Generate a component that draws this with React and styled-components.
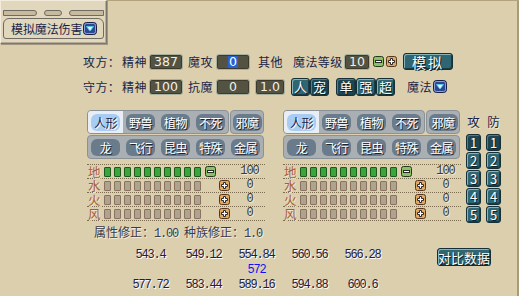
import React from 'react';
import styled, { createGlobalStyle } from 'styled-components';

const Global = createGlobalStyle`
  html, body { margin: 0; padding: 0; background: #dccfad; }
  body { font-family: "Noto Sans CJK SC", "Noto Sans", sans-serif; }
  * { box-sizing: border-box; }
`;

const NAVY = '#1b1f46';
const CJK = '"Noto Sans CJK SC", "Noto Sans", sans-serif';
const MONO = '"Liberation Mono", "DejaVu Sans Mono", monospace';

const Page = styled.div`
  width: 519px;
  height: 296px;
  overflow: hidden;
  background: #dccfad;
  box-shadow: inset 0 1px 0 #b3a37d, inset -2px 0 0 #a99a78;
  color: ${NAVY};
  font-family: ${CJK};
  font-size: 12px;
`;

/* ---------- title frame ---------- */
const TitleFrame = styled.div`
  width: 107px;
  height: 44px;
  background: #e1d7bd;
  border: 1px solid #f3ecdc;
  border-right-color: #7e776b;
  border-bottom-color: #7e776b;
  box-shadow: inset -1px -1px 0 #b4ab98, 1px 1px 0 #a09682;
  padding: 8px 2px 0 2px;
  display: flex;
  flex-direction: column;
  gap: 1px;
`;
const Grooves = styled.div`
  display: flex;
  align-items: center;
  justify-content: space-between;
  height: 8px;
`;
const Groove = styled.div`
  width: ${p => p.w}px;
  height: 6px;
  background: #c7bb9f;
  border: 1px solid #6f6a62;
  border-radius: ${p => p.r};
`;
const TitleBox = styled.div`
  height: 21px;
  border: 1px solid #6f6a62;
  border-radius: 6px 6px 3px 3px;
  display: flex;
  align-items: center;
  padding-left: 7px;
  gap: 1px;
  font-size: 12px;
  letter-spacing: -0.1px;
  color: ${NAVY};
`;

const DropIcon = () => (
  <svg width="14" height="13" viewBox="0 0 14 13">
    <rect x="0.5" y="0.5" width="13" height="12" rx="3" fill="#2c4890" stroke="#18204a" />
    <rect x="1.5" y="1.5" width="11" height="10" rx="2" fill="none" stroke="#8ea2dc" />
    <polygon points="3.5,4.5 10.5,4.5 7,9" fill="#eaffff" stroke="#5cc4e4" />
  </svg>
);

/* ---------- form rows ---------- */
const Form = styled.div`
  display: flex;
  flex-direction: column;
  gap: 8px;
  margin: 9px 0 0 83px;
`;
const Row = styled.div`
  display: flex;
  align-items: center;
  height: 17px;
`;
const Label = styled.span`
  flex: none;
  width: ${p => p.w}px;
  margin-left: ${p => p.ml || 0}px;
  font-size: 12px;
  letter-spacing: 0.4px;
  white-space: nowrap;
  color: ${NAVY};
  line-height: 17px;
`;
const Field = styled.div`
  flex: none;
  width: ${p => p.w}px;
  height: 16px;
  margin-left: ${p => p.ml || 0}px;
  background: #545240;
  border: 1px solid #a9b19f;
  border-radius: 3px;
  box-shadow: inset 0 0 0 1px #3c3a2e;
  color: #f1f0e6;
  font-family: "DejaVu Sans", sans-serif;
  font-size: 12.5px;
  display: flex;
  align-items: center;
  justify-content: center;
`;
const Selected = styled.span`
  background: #2c5fd0;
  color: #fff;
  padding: 0 1px;
  line-height: 12px;
`;
const StepWrap = styled.span`
  flex: none;
  display: inline-flex;
  margin-left: ${p => p.ml || 0}px;
`;
const StepIcon = ({ kind }) =>
  kind === 'minus' ? (
    <svg width="11" height="11" viewBox="0 0 11 11">
      <rect x="0.5" y="0.5" width="10" height="10" rx="2" fill="#8cbf6a" stroke="#243a1a" />
      <rect x="2.5" y="4.5" width="6" height="2" fill="#ffffff" stroke="#2a2a2a" />
    </svg>
  ) : (
    <svg width="11" height="11" viewBox="0 0 11 11">
      <rect x="0.5" y="0.5" width="10" height="10" rx="2" fill="#e0a864" stroke="#57361a" />
      <path d="M4.5 2.5h2v2h2v2h-2v2h-2v-2h-2v-2h2z" fill="#ffffff" stroke="#2a2a2a" />
    </svg>
  );

const TealBtn = styled.div`
  flex: none;
  width: ${p => p.w}px;
  height: ${p => p.h || 17}px;
  margin-left: ${p => p.ml || 0}px;
  background: ${p => (p.dark ? '#1d4652' : '#2f6672')};
  border: 1px solid #173038;
  border-radius: 3px;
  box-shadow: inset 1px 1px 0 ${p => (p.dark ? '#4f7f88' : '#86b4ba')}, inset -1px -1px 0 #1a3c44;
  color: #ffffff;
  font-size: ${p => p.fs || 13}px;
  letter-spacing: ${p => p.ls || 0}px;
  display: flex;
  align-items: center;
  justify-content: center;
  text-shadow: 1px 1px 0 #0e2228;
`;
const BtnGroup = styled.div`
  flex: none;
  display: flex;
  margin-left: ${p => p.ml || 0}px;
`;

/* ---------- middle ---------- */
const Middle = styled.div`
  display: flex;
  margin: 15px 0 0 87px;
`;
const Side = styled.div`
  flex: none;
  width: 178px;
  margin-left: ${p => p.ml || 0}px;
`;
const TabPanel = styled.div`
  display: flex;
  flex-direction: column;
  gap: 1px;
  width: 177px;
`;
const TabRow = styled.div`
  display: flex;
  height: 24px;
  gap: 1px;
`;
const TabSeg = styled.div`
  display: flex;
  flex: ${p => (p.w ? 'none' : 1)};
  width: ${p => (p.w ? `${p.w}px` : 'auto')};
  height: 24px;
  background: #a9afb2;
  border: 1px solid #8b9296;
  border-radius: 4px;
  overflow: hidden;
`;
const TabCell = styled.div`
  flex: 1;
  display: flex;
  align-items: center;
  justify-content: center;
  background: ${p => (p.active ? '#e8eef3' : 'transparent')};
`;
const TabPill = styled.div`
  width: 29px;
  height: 17px;
  border-radius: 6px;
  background: ${p => (p.active ? '#a9cdf2' : '#6a7b8c')};
  color: ${p => (p.active ? NAVY : '#ffffff')};
  text-shadow: ${p => (p.active ? '1px 1px 0 #ffffff' : '1px 1px 0 #1a2430')};
  font-size: 12px;
  letter-spacing: -0.5px;
  display: flex;
  align-items: center;
  justify-content: center;
  white-space: nowrap;
`;

const Bars = styled.div`
  margin-top: 5px;
  border-top: 1px dotted #7b6c52;
`;
const BarRow = styled.div`
  display: flex;
  align-items: center;
  height: 14px;
  border-bottom: 1px dotted #7b6c52;
`;
const ElemLabel = styled.span`
  flex: none;
  width: 17px;
  padding-left: 1px;
  font-size: 12.5px;
  line-height: 13px;
  color: #a75c3a;
  text-shadow: 1px 1px 0 #efe6d0;
`;
const Cells = styled.div`
  flex: none;
  display: flex;
  gap: 3px;
  width: 97px;
`;
const Cell = styled.div`
  width: 7px;
  height: 10px;
  border-radius: 1px;
  background: ${p => (p.on ? '#3aa53a' : '#aea48d')};
  border: 1px solid ${p => (p.on ? '#1e5a1e' : '#8a7262')};
`;
const StepSlot = styled.div`
  flex: none;
  width: 29px;
  display: flex;
  padding-left: ${p => (p.op === 'minus' ? 4 : 18)}px;
`;
const Value = styled.span`
  flex: 1;
  text-align: center;
  padding-left: 4px;
  font-family: ${MONO};
  font-size: 12px;
  line-height: 13px;
  letter-spacing: -1px;
  color: #3b3a36;
  text-shadow: 1px 1px 0 #f2ead6;
`;

const AtkDef = styled.div`
  flex: none;
  margin-left: 5px;
  display: grid;
  grid-template-columns: 15px 15px;
  grid-template-rows: 23px;
  grid-auto-rows: 17px;
  column-gap: 5px;
  row-gap: 1px;
`;
const HeadCell = styled.div`
  display: flex;
  align-items: center;
  justify-content: center;
  font-size: 12.5px;
  color: ${NAVY};
  text-shadow: 1px 1px 0 #f2ead6;
`;

/* ---------- bottom ---------- */
const Correction = styled.div`
  margin: 2px 0 0 94px;
  height: 14px;
  line-height: 14px;
  font-size: 12px;
  color: #3a3a4a;
  text-shadow: 1px 1px 0 #f5eedc;
  white-space: nowrap;
`;
const Mono = styled.span`
  font-family: ${MONO};
  font-size: 12px;
  letter-spacing: -1.2px;
`;
const Results = styled.div`
  display: flex;
  align-items: flex-start;
  margin: 9px 0 0 124px;
`;
const Grid = styled.div`
  display: grid;
  grid-template-columns: repeat(5, 53px);
  grid-template-rows: repeat(3, 15px);
`;
const Num = styled.div`
  grid-row: ${p => p.row};
  grid-column: ${p => p.col};
  text-align: center;
  font-family: ${MONO};
  font-size: 12px;
  line-height: 15px;
  letter-spacing: -1.2px;
  color: ${p => (p.blue ? '#1212f0' : '#1e2142')};
  text-shadow: ${p => (p.blue ? 'none' : '1px 1px 0 #ffffff')};
`;

const TABS1A = ['人形', '野兽', '植物', '不死'];
const TABS2 = ['龙', '飞行', '昆虫', '特殊', '金属'];
const ELEMENTS = [
  { name: '地', filled: 10, value: 100, op: 'minus' },
  { name: '水', filled: 0, value: 0, op: 'plus' },
  { name: '火', filled: 0, value: 0, op: 'plus' },
  { name: '风', filled: 0, value: 0, op: 'plus' },
];
const ROW1 = ['543.4', '549.12', '554.84', '560.56', '566.28'];
const ROW3 = ['577.72', '583.44', '589.16', '594.88', '600.6'];

function SidePanel({ ml }) {
  return (
    <Side ml={ml}>
      <TabPanel>
        <TabRow>
          <TabSeg w={142}>
            {TABS1A.map((t, i) => (
              <TabCell key={t} active={i === 0}>
                <TabPill active={i === 0}>{t}</TabPill>
              </TabCell>
            ))}
          </TabSeg>
          <TabSeg>
            <TabCell>
              <TabPill>邪魔</TabPill>
            </TabCell>
          </TabSeg>
        </TabRow>
        <TabRow>
          <TabSeg>
            {TABS2.map(t => (
              <TabCell key={t}>
                <TabPill>{t}</TabPill>
              </TabCell>
            ))}
          </TabSeg>
        </TabRow>
      </TabPanel>
      <Bars>
        {ELEMENTS.map(e => (
          <BarRow key={e.name}>
            <ElemLabel>{e.name}</ElemLabel>
            <Cells>
              {Array.from({ length: 10 }).map((_, i) => (
                <Cell key={i} on={i < e.filled} />
              ))}
            </Cells>
            <StepSlot op={e.op}>
              <StepIcon kind={e.op} />
            </StepSlot>
            <Value>{e.value}</Value>
          </BarRow>
        ))}
      </Bars>
    </Side>
  );
}

export default function App() {
  return (
    <>
      <Global />
      <Page>
        <TitleFrame>
          <Grooves>
            <Groove w={34} r="0 3px 3px 0" />
            <Groove w={18} r="4px" />
            <Groove w={35} r="3px 0 0 3px" />
          </Grooves>
          <TitleBox>
            模拟魔法伤害
            <DropIcon />
          </TitleBox>
        </TitleFrame>

        <Form>
          <Row>
            <Label w={39}>攻方：</Label>
            <Label w={27}>精神</Label>
            <Field w={34}>387</Field>
            <Label w={28} ml={5}>魔攻</Label>
            <Field w={34}>
              <Selected>0</Selected>
            </Field>
            <Label w={35} ml={8}>其他</Label>
            <Label w={51}>魔法等级</Label>
            <Field w={26}>10</Field>
            <StepWrap ml={3}>
              <StepIcon kind="minus" />
            </StepWrap>
            <StepWrap ml={2}>
              <StepIcon kind="plus" />
            </StepWrap>
            <TealBtn w={50} h={17} ml={6} fs={14} ls={2}>模拟</TealBtn>
          </Row>
          <Row>
            <Label w={39}>守方：</Label>
            <Label w={27}>精神</Label>
            <Field w={34}>100</Field>
            <Label w={28} ml={5}>抗魔</Label>
            <Field w={34}>0</Field>
            <Field w={30} ml={5}>1.0</Field>
            <BtnGroup ml={6}>
              <TealBtn w={19} h={18}>人</TealBtn>
              <TealBtn w={19} h={18} dark>宠</TealBtn>
            </BtnGroup>
            <BtnGroup ml={7}>
              <TealBtn w={20} h={18} dark>单</TealBtn>
              <TealBtn w={20} h={18}>强</TealBtn>
              <TealBtn w={19} h={18}>超</TealBtn>
            </BtnGroup>
            <Label w={26} ml={12}>魔法</Label>
            <StepWrap>
              <DropIcon />
            </StepWrap>
          </Row>
        </Form>

        <Middle>
          <SidePanel />
          <SidePanel ml={18} />
          <AtkDef>
            <HeadCell>攻</HeadCell>
            <HeadCell>防</HeadCell>
            {[1, 2, 3, 4, 5].map(n => (
              <React.Fragment key={n}>
                <TealBtn w={15} h={17} dark={n === 1} fs={13}>{n}</TealBtn>
                <TealBtn w={15} h={17} dark={n === 1} fs={13}>{n}</TealBtn>
              </React.Fragment>
            ))}
          </AtkDef>
        </Middle>

        <Correction>
          属性修正：<Mono>1.00 </Mono>种族修正：<Mono>1.0</Mono>
        </Correction>

        <Results>
          <Grid>
            {ROW1.map((v, i) => (
              <Num key={v} row={1} col={i + 1}>{v}</Num>
            ))}
            <Num blue row={2} col={3}>572</Num>
            {ROW3.map((v, i) => (
              <Num key={v} row={3} col={i + 1}>{v}</Num>
            ))}
          </Grid>
          <TealBtn w={54} h={18} ml={48} fs={13}>对比数据</TealBtn>
        </Results>
      </Page>
    </>
  );
}
